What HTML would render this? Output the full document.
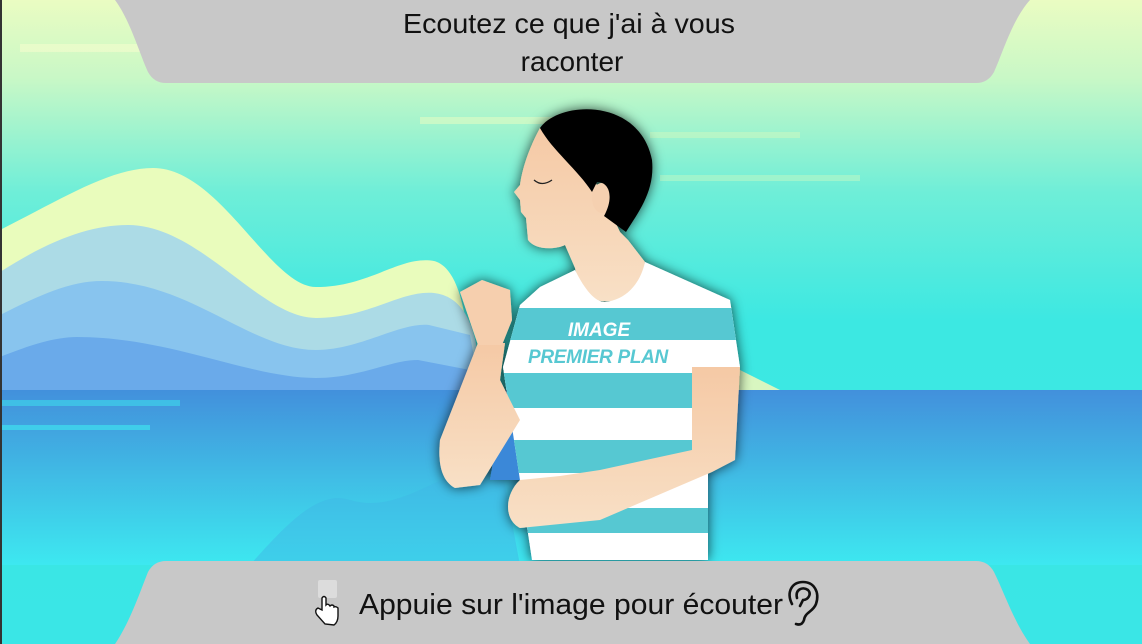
<!DOCTYPE html>
<html><head><meta charset="utf-8"><style>
html,body{margin:0;padding:0;width:1142px;height:644px;overflow:hidden}
svg{display:block}
</style></head><body>
<svg width="1142" height="644" viewBox="0 0 1142 644" xmlns="http://www.w3.org/2000/svg">
<defs>
<linearGradient id="sky" x1="0" y1="0" x2="0" y2="1">
<stop offset="0" stop-color="#eafcc2"/><stop offset="0.12" stop-color="#c9f8c6"/><stop offset="0.3" stop-color="#6eeed8"/><stop offset="0.5" stop-color="#3ce8e2"/><stop offset="1" stop-color="#3ae6e6"/>
</linearGradient>
<linearGradient id="sea" x1="0" y1="0" x2="0" y2="1">
<stop offset="0" stop-color="#4290dc"/><stop offset="0.45" stop-color="#40b8e4"/><stop offset="1" stop-color="#3de8f0"/>
</linearGradient>
<linearGradient id="skin" x1="0" y1="0" x2="0" y2="1">
<stop offset="0" stop-color="#f5c9a5"/><stop offset="1" stop-color="#f8e0c6"/>
</linearGradient>
<clipPath id="shirtc"><path d="M540,287 L575,270 C585,290 595,302 605,302 C625,300 640,285 645,262 L730,300 L740,367 L708,367 L708,560 L532,560 L503,367 L520,305 Z"/></clipPath>
<filter id="sh" x="-20%" y="-20%" width="140%" height="140%"><feDropShadow dx="0" dy="0" stdDeviation="6" flood-color="#000" flood-opacity="0.7"/></filter>
</defs>
<rect width="1142" height="644" fill="url(#sky)"/>
<rect x="20" y="44" width="120" height="8" fill="#f0fccc" opacity="0.7"/>
<rect x="420" y="117" width="170" height="7" fill="#d8fbc4" opacity="0.7"/>
<rect x="650" y="132" width="150" height="6" fill="#c8f8c2" opacity="0.6"/>
<rect x="660" y="175" width="200" height="6" fill="#b8f6c6" opacity="0.6"/>
<path d="M0,230 C60,200 110,168 153,168 C220,168 270,287 316,287 C370,287 400,255 434,261 C450,265 470,290 470,390 L0,390 Z" fill="#e9fcbc"/>
<path d="M0,272 C50,240 90,225 128,225 C200,225 260,318 316,318 C370,318 400,290 434,293 C460,296 480,320 480,390 L0,390 Z" fill="#acdbe6"/>
<path d="M0,315 C40,295 70,281 102,281 C190,281 250,350 316,350 C360,350 400,322 429,325 L470,335 L480,390 L0,390 Z" fill="#88c4ee"/>
<path d="M0,357 C30,345 55,337 77,337 C170,337 250,378 316,378 C360,378 390,360 418,360 L470,370 L470,390 L0,390 Z" fill="#6aaaea"/>
<path d="M730,365 L780,390 L730,390 Z" fill="#d8f6c0"/>
<rect x="0" y="390" width="1142" height="175" fill="url(#sea)"/>
<rect x="0" y="400" width="180" height="6" fill="#3fd0ea" opacity="0.7"/>
<rect x="0" y="425" width="150" height="5" fill="#3fe0ee" opacity="0.7"/>
<path d="M250,565 C290,520 320,490 350,500 C400,515 440,470 500,460 L520,565 Z" fill="#3fb8e6" opacity="0.5"/>
<rect x="0" y="0" width="2" height="644" fill="#333"/>
<g filter="url(#sh)">
<path d="M540,388 L558,445 L540,480 L490,480 L500,420 Z" fill="#3a88d8"/>
<path d="M540,128 C528,150 522,170 520,185 L514,192 L520,200 L521,212 L526,218 L528,240 C535,250 555,250 565,245 L575,268 L580,290 C590,305 620,305 640,290 L645,262 L628,240 L620,232 C612,215 605,200 600,190 L595,182 C580,165 555,150 540,128 Z" fill="url(#skin)"/>
<ellipse cx="602" cy="198" rx="10" ry="15" fill="#f5d0b0"/>
<path d="M540,128 C560,100 640,98 652,160 C655,190 640,210 626,232 L604,216 C614,198 610,182 597,182 L592,192 C578,170 552,150 540,128 Z" fill="#000"/>
<g clip-path="url(#shirtc)">
<rect x="500" y="260" width="245" height="310" fill="#fff"/>
<rect x="500" y="308" width="245" height="32" fill="#57c8d2"/>
<rect x="500" y="373" width="245" height="35" fill="#57c8d2"/>
<rect x="500" y="440" width="245" height="33" fill="#57c8d2"/>
<rect x="500" y="508" width="245" height="25" fill="#57c8d2"/>
</g>
<path d="M692,367 L740,367 L735,460 L712,472 L600,520 L520,528 C504,520 504,495 520,480 L560,476 L600,470 L692,450 Z" fill="url(#skin)"/>
<path d="M478,343 L505,343 L500,380 L520,420 L480,485 L455,488 C440,480 438,460 440,440 Z" fill="url(#skin)"/>
<path d="M460,292 L482,280 L510,290 L512,320 L502,345 L478,345 Z" fill="#f6cfae"/>
</g>
<path d="M534,180 Q542,187 552,180" stroke="#222" stroke-width="1.3" fill="none"/>
<text x="599" y="336" font-family="Liberation Sans, sans-serif" font-weight="bold" font-style="italic" font-size="19" fill="#fff" text-anchor="middle">IMAGE</text>
<text x="598" y="363" font-family="Liberation Sans, sans-serif" font-weight="bold" font-style="italic" font-size="19" fill="#57c8d2" text-anchor="middle" letter-spacing="-0.3">PREMIER PLAN</text>
<path d="M115,0 L1030,0 C1012,20 1002,55 994,72 Q988,83 976,83 L166,83 Q154,83 148,72 C140,55 130,20 115,0 Z" fill="#c8c8c8"/>
<path d="M166,561 L976,561 Q988,561 994,572 C1004,592 1014,622 1030,644 L115,644 C130,622 140,592 148,572 Q154,561 166,561 Z" fill="#c8c8c8"/>
<text x="569" y="33" font-family="Liberation Sans, sans-serif" font-size="28" fill="#111" text-anchor="middle" textLength="332" lengthAdjust="spacingAndGlyphs">Ecoutez ce que j'ai à vous</text>
<text x="572" y="71" font-family="Liberation Sans, sans-serif" font-size="28" fill="#111" text-anchor="middle">raconter</text>
<text x="359" y="614" font-family="Liberation Sans, sans-serif" font-size="29" fill="#111" textLength="424" lengthAdjust="spacingAndGlyphs">Appuie sur l'image pour écouter</text>
<rect x="318" y="580" width="19" height="18" rx="2" fill="#dcdcdc"/>
<path d="M322,598 L322,610 L318,608 Q314,610 317,615 L325,624 L334,625 Q338,622 338,616 L338,608 Q336,606 334,607 L334,606 Q332,604 330,606 Q328,603 326,605 L326,598 Q324,595 322,598 Z" fill="#fff" stroke="#111" stroke-width="1.4"/>
<path d="M792,604 C786,592 792,582 803,582 C814,582 820,592 816,604 C813,612 805,612 804,620 Q802,626 796,624 M797,598 C795,590 802,586 808,590 C812,594 808,600 803,600 L800,606" stroke="#111" stroke-width="2.6" fill="none" stroke-linecap="round"/>
</svg>
</body></html>
